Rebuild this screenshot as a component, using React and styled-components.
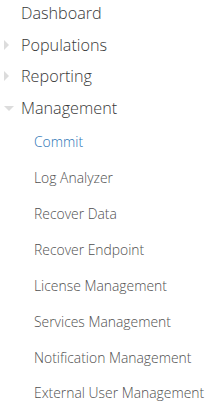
import React from "react";
import styled, { createGlobalStyle } from "styled-components";

const Global = createGlobalStyle`
  html, body { margin: 0; padding: 0; background: #ffffff; }
  body { font-family: "Open Sans", "Liberation Sans", sans-serif; }
`;

const Nav = styled.nav`
  display: flex;
  flex-direction: column;
  margin-top: -3px;
  width: 214px;
`;

const TopItem = styled.div`
  display: flex;
  align-items: center;
  height: 31.7px;
  position: relative;
  padding-left: 21px;
  font-size: 16.2px;
  font-weight: 300;
  color: #383838;
  white-space: nowrap;
`;

const Caret = styled.span`
  position: absolute;
  left: 4px;
  top: 50%;
  width: 0;
  height: 0;
  ${(p) =>
    p.$open
      ? `
    margin-top: -2px;
    border-left: 5px solid transparent;
    border-right: 5px solid transparent;
    border-top: 5px solid #dcdcdc;
  `
      : `
    margin-top: -5px;
    border-top: 5px solid transparent;
    border-bottom: 5px solid transparent;
    border-left: 5px solid #dcdcdc;
  `}
`;

const SubList = styled.div`
  display: flex;
  flex-direction: column;
`;

const SubItem = styled.div`
  display: flex;
  align-items: center;
  height: 35.9px;
  padding-left: 34px;
  font-size: 13.9px;
  font-weight: 300;
  color: ${(p) => (p.$active ? "#2a74b5" : "#505050")};
  white-space: nowrap;
`;

const subs = [
  "Commit",
  "Log Analyzer",
  "Recover Data",
  "Recover Endpoint",
  "License Management",
  "Services Management",
  "Notification Management",
  "External User Management",
];

export default function App() {
  return (
    <>
      <Global />
      <Nav>
        <TopItem>Dashboard</TopItem>
        <TopItem>
          <Caret />
          Populations
        </TopItem>
        <TopItem>
          <Caret />
          Reporting
        </TopItem>
        <TopItem>
          <Caret $open />
          Management
        </TopItem>
        <SubList>
          {subs.map((s, i) => (
            <SubItem key={s} $active={i === 0}>
              {s}
            </SubItem>
          ))}
        </SubList>
      </Nav>
    </>
  );
}
